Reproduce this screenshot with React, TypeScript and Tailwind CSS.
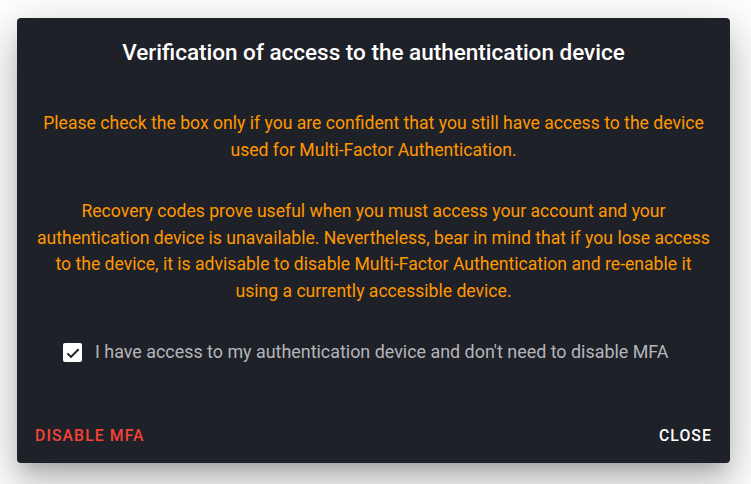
export default function App() {
  return (
    <div className="w-[751px] h-[484px] bg-white pl-[17px] pt-[18px] font-['Roboto',sans-serif]">
      <div className="w-[713px] h-[445px] bg-[#1f2129] rounded-[4px] shadow-[0_11px_15px_-7px_rgba(0,0,0,0.2),0_24px_38px_3px_rgba(0,0,0,0.14),0_9px_46px_8px_rgba(0,0,0,0.12)] flex flex-col">
        <h2 className="pt-[18px] h-[50px] text-center text-[22.5px] leading-[32px] font-medium text-white">
          Verification of access to the authentication device
        </h2>

        <div className="px-[18px] pt-[42px] text-center text-[17.6px] leading-[26.6px] text-[#ff9800]">
          <p>
            Please check the box only if you are confident that you still have access to the device used for
            Multi-Factor Authentication.
          </p>
          <p className="mt-[35px]">
            Recovery codes prove useful when you must access your account and your authentication device is
            unavailable. Nevertheless, bear in mind that if you lose access to the device, it is advisable to disable
            Multi-Factor Authentication and re-enable it using a currently accessible device.
          </p>
        </div>

        <label className="mt-[36px] ml-[46px] flex items-center gap-[13px] h-[24px]">
          <span className="w-[19px] h-[19px] rounded-[2px] bg-white flex items-center justify-center">
            <svg viewBox="0 0 24 24" className="w-[18px] h-[18px]">
              <path d="M4.5 12.5l4.8 4.8L19.5 7" fill="none" stroke="#1f2129" strokeWidth="2.6" />
            </svg>
          </span>
          <span className="text-[17.9px] text-[#b5b6b9]">
            I have access to my authentication device and don't need to disable MFA
          </span>
        </label>

        <div className="mt-auto mb-[9px] px-[8px] flex items-center justify-between">
          <button className="px-[10px] h-[36px] text-[15.75px] font-medium uppercase tracking-[1.1px] text-[#f44336]">
            Disable MFA
          </button>
          <button className="px-[10px] h-[36px] text-[15.75px] font-medium uppercase tracking-[1.1px] text-white">
            Close
          </button>
        </div>
      </div>
    </div>
  )
}
